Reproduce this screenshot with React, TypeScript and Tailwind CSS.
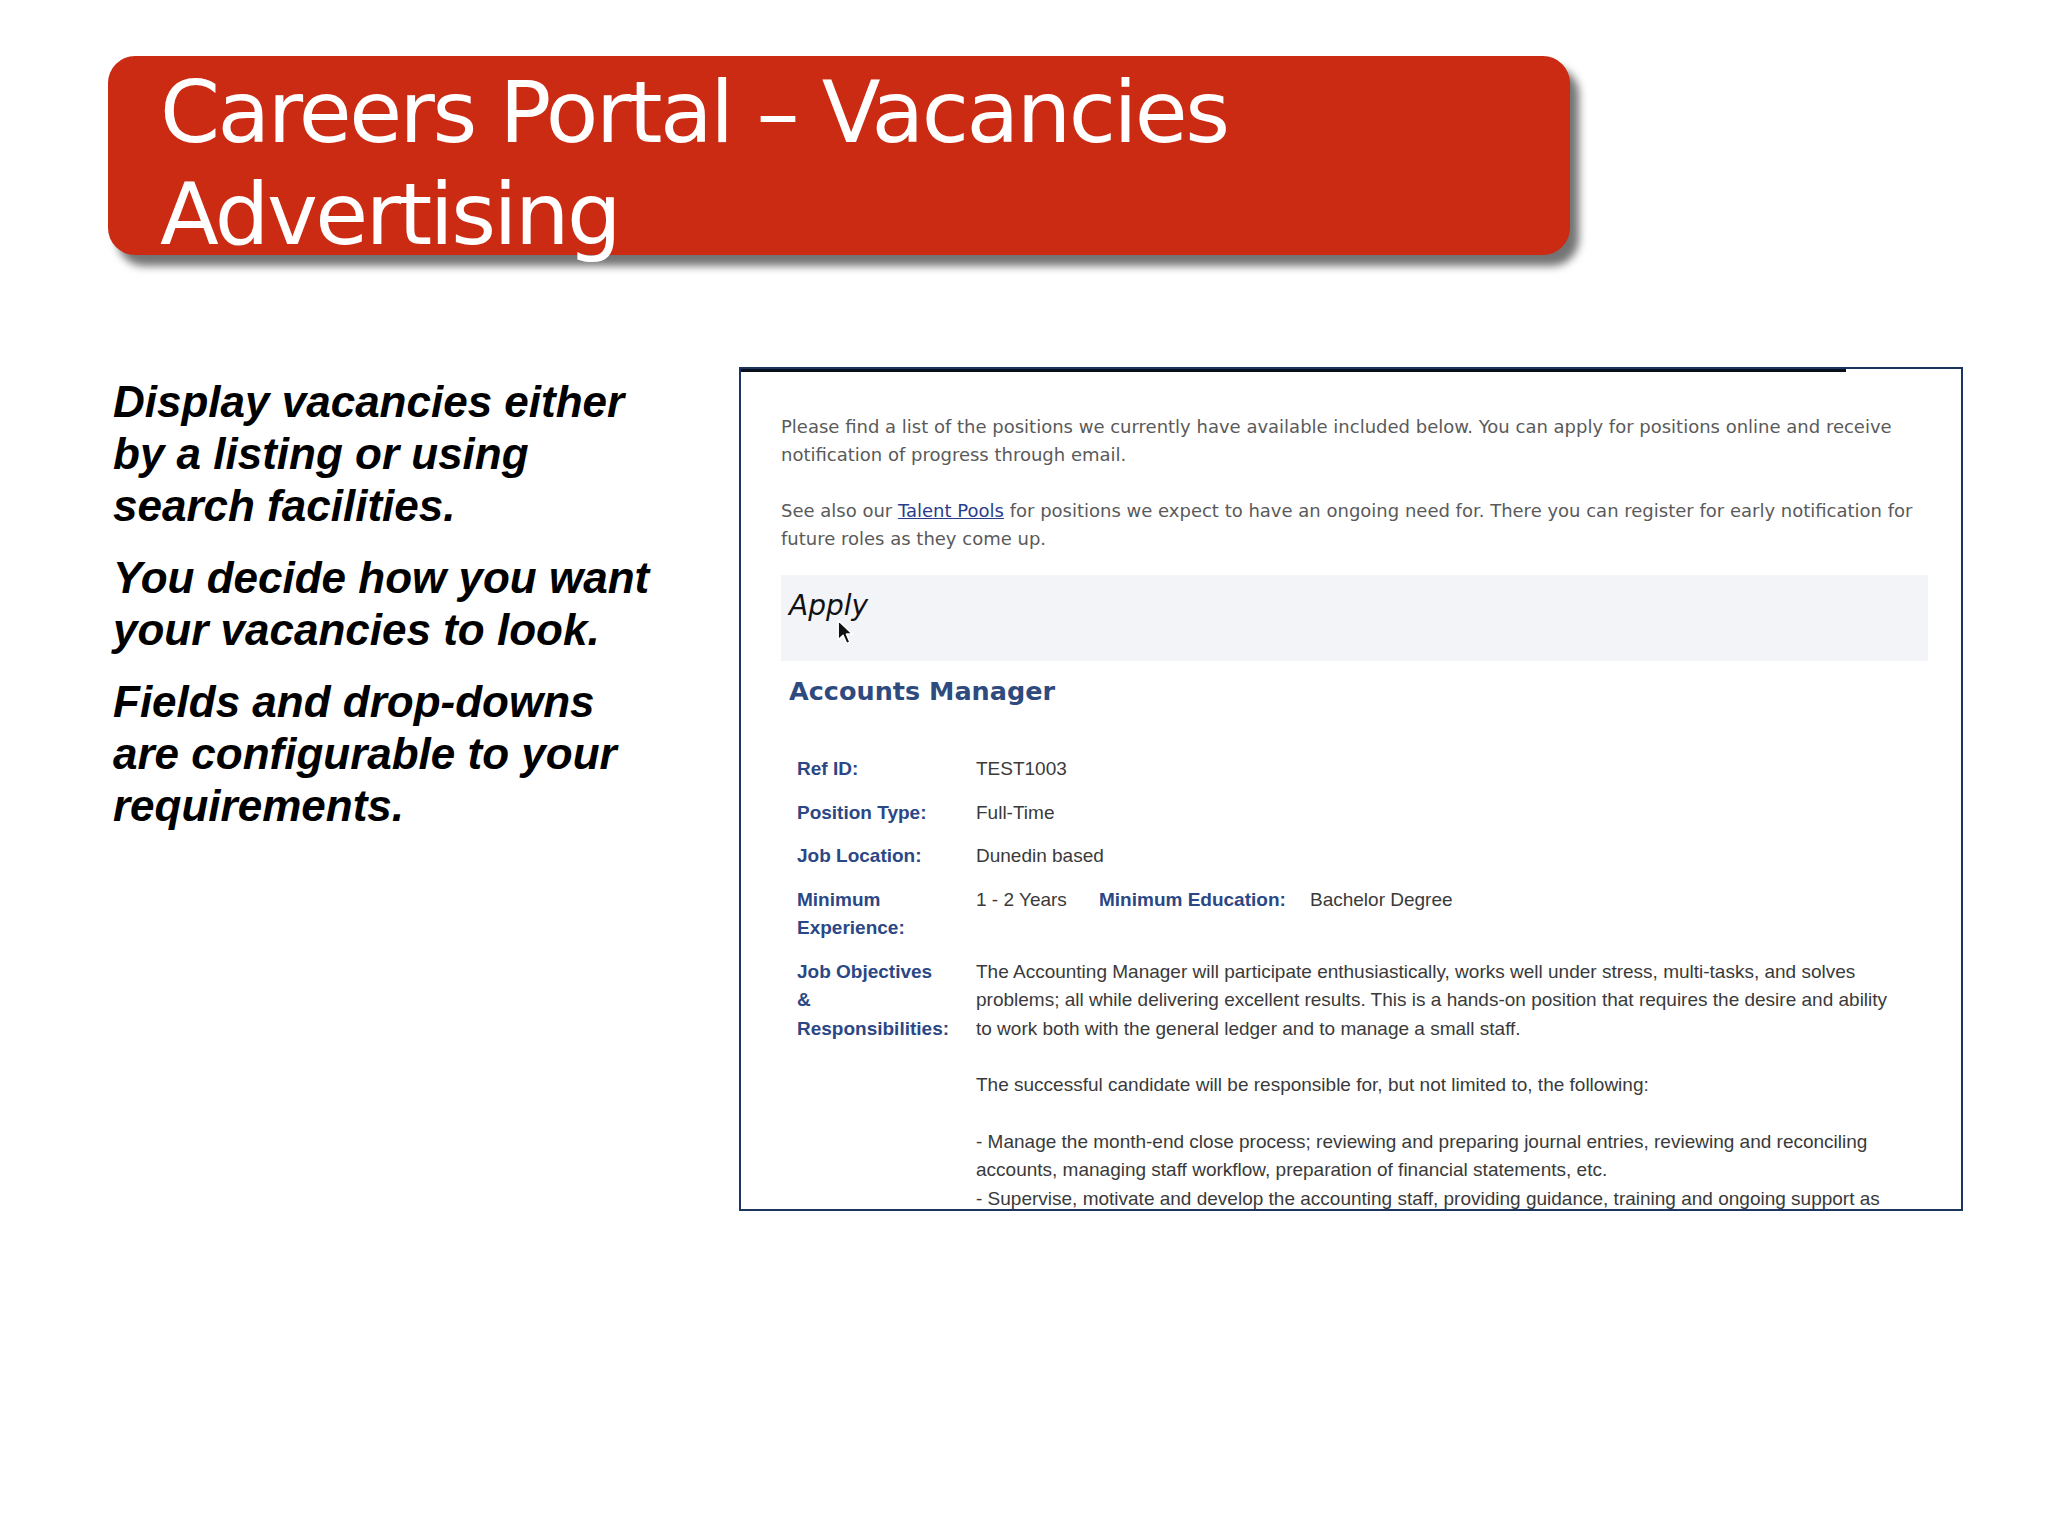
import React from "react";

const labelCls = "font-bold text-[#2b4785]";

function Cursor() {
  return (
    <svg
      className="absolute left-[96px] top-[250px]"
      width="17"
      height="27"
      viewBox="0 0 14 22"
    >
      <path
        d="M1 1 L1 17 L5 13.2 L8 20 L10.6 18.9 L7.7 12.3 L12.6 12.3 Z"
        fill="#111"
        stroke="#fff"
        strokeWidth="1.2"
        strokeLinejoin="round"
      />
    </svg>
  );
}

export default function App() {
  return (
    <div className="relative w-[2048px] h-[1536px] bg-white overflow-hidden">
      {/* Title banner */}
      <div className="ml-[108px] pt-[56px]">
        <div className="w-[1462px] h-[199px] rounded-[27px] bg-[#cb2a13] shadow-[9px_11px_9px_rgba(0,0,0,0.55)] pl-[52px] pt-[5px]">
          <div
            className="text-white text-[86px] leading-[102px] tracking-[-2.5px] whitespace-nowrap"
            style={{ fontFamily: '"DejaVu Sans", sans-serif' }}
          >
            <div>Careers Portal – Vacancies</div>
            <div>Advertising</div>
          </div>
        </div>
      </div>

      {/* Body */}
      <div className="flex items-start mt-[112px]">
        <div
          className="w-[739px] shrink-0 pl-[113px] pt-[9px] flex flex-col gap-[20px] text-[44px] leading-[52px] font-bold italic text-black whitespace-nowrap"
          style={{ fontFamily: '"Liberation Sans", Arial, sans-serif' }}
        >
          <p>
            Display vacancies either
            <br />
            by a listing or using
            <br />
            search facilities.
          </p>
          <p>
            You decide how you want
            <br />
            your vacancies to look.
          </p>
          <p>
            Fields and drop-downs
            <br />
            are configurable to your
            <br />
            requirements.
          </p>
        </div>

        {/* Screenshot panel */}
        <div className="relative shrink-0 w-[1224px] h-[844px] border-2 border-[#1c3560] bg-white overflow-hidden">
          <div className="absolute left-0 top-0 w-[1105px] h-[3px] bg-[#0a0f1c]" />
          <div className="pl-[40px] pr-[33px] pt-[44px]">
            <div
              className="text-[18px] leading-[28px] text-[#5a5a5a] flex flex-col gap-[28px] whitespace-nowrap"
              style={{ fontFamily: '"DejaVu Sans", sans-serif' }}
            >
              <p>
                Please find a list of the positions we currently have available included below. You can apply for positions online and receive
                <br />
                notification of progress through email.
              </p>
              <p>
                See also our{" "}
                <span className="text-[#2a3c8c] underline">Talent Pools</span>{" "}
                for positions we expect to have an ongoing need for. There you can register for early notification for
                <br />
                future roles as they come up.
              </p>
            </div>

            <div className="mt-[22px] h-[86px] bg-[#f3f4f8] pl-[8px] pt-[15px]">
              <span
                className="italic text-[28px] leading-[32px] text-[#111]"
                style={{ fontFamily: '"DejaVu Sans", sans-serif' }}
              >
                Apply
              </span>
            </div>

            <div
              className="mt-[14px] pl-[8px] text-[25.5px] leading-[32px] font-bold text-[#2e4a7e]"
              style={{ fontFamily: '"DejaVu Sans", sans-serif' }}
            >
              Accounts Manager
            </div>

            <div
              className="mt-[48px] pl-[16px] grid grid-cols-[179px_1fr] gap-y-[15px] text-[19px] leading-[28.5px] text-[#3a3a3a] whitespace-nowrap"
              style={{ fontFamily: '"Liberation Sans", Arial, sans-serif' }}
            >
              <div className={labelCls}>Ref ID:</div>
              <div>TEST1003</div>

              <div className={labelCls}>Position Type:</div>
              <div>Full-Time</div>

              <div className={labelCls}>Job Location:</div>
              <div>Dunedin based</div>

              <div className={labelCls}>
                Minimum
                <br />
                Experience:
              </div>
              <div className="flex">
                <span className="w-[123px]">1 - 2 Years</span>
                <span className={`w-[211px] ${labelCls}`}>Minimum Education:</span>
                <span>Bachelor Degree</span>
              </div>

              <div className={labelCls}>
                Job Objectives
                <br />
                &amp;
                <br />
                Responsibilities:
              </div>
              <div>
                <p>
                  The Accounting Manager will participate enthusiastically, works well under stress, multi-tasks, and solves
                  <br />
                  problems; all while delivering excellent results. This is a hands-on position that requires the desire and ability
                  <br />
                  to work both with the general ledger and to manage a small staff.
                </p>
                <p className="mt-[28px]">
                  The successful candidate will be responsible for, but not limited to, the following:
                </p>
                <p className="mt-[28px]">
                  - Manage the month-end close process; reviewing and preparing journal entries, reviewing and reconciling
                  <br />
                  accounts, managing staff workflow, preparation of financial statements, etc.
                  <br />
                  - Supervise, motivate and develop the accounting staff, providing guidance, training and ongoing support as
                  <br />
                  needed.
                </p>
              </div>
            </div>
          </div>
          <Cursor />
        </div>
      </div>
    </div>
  );
}
